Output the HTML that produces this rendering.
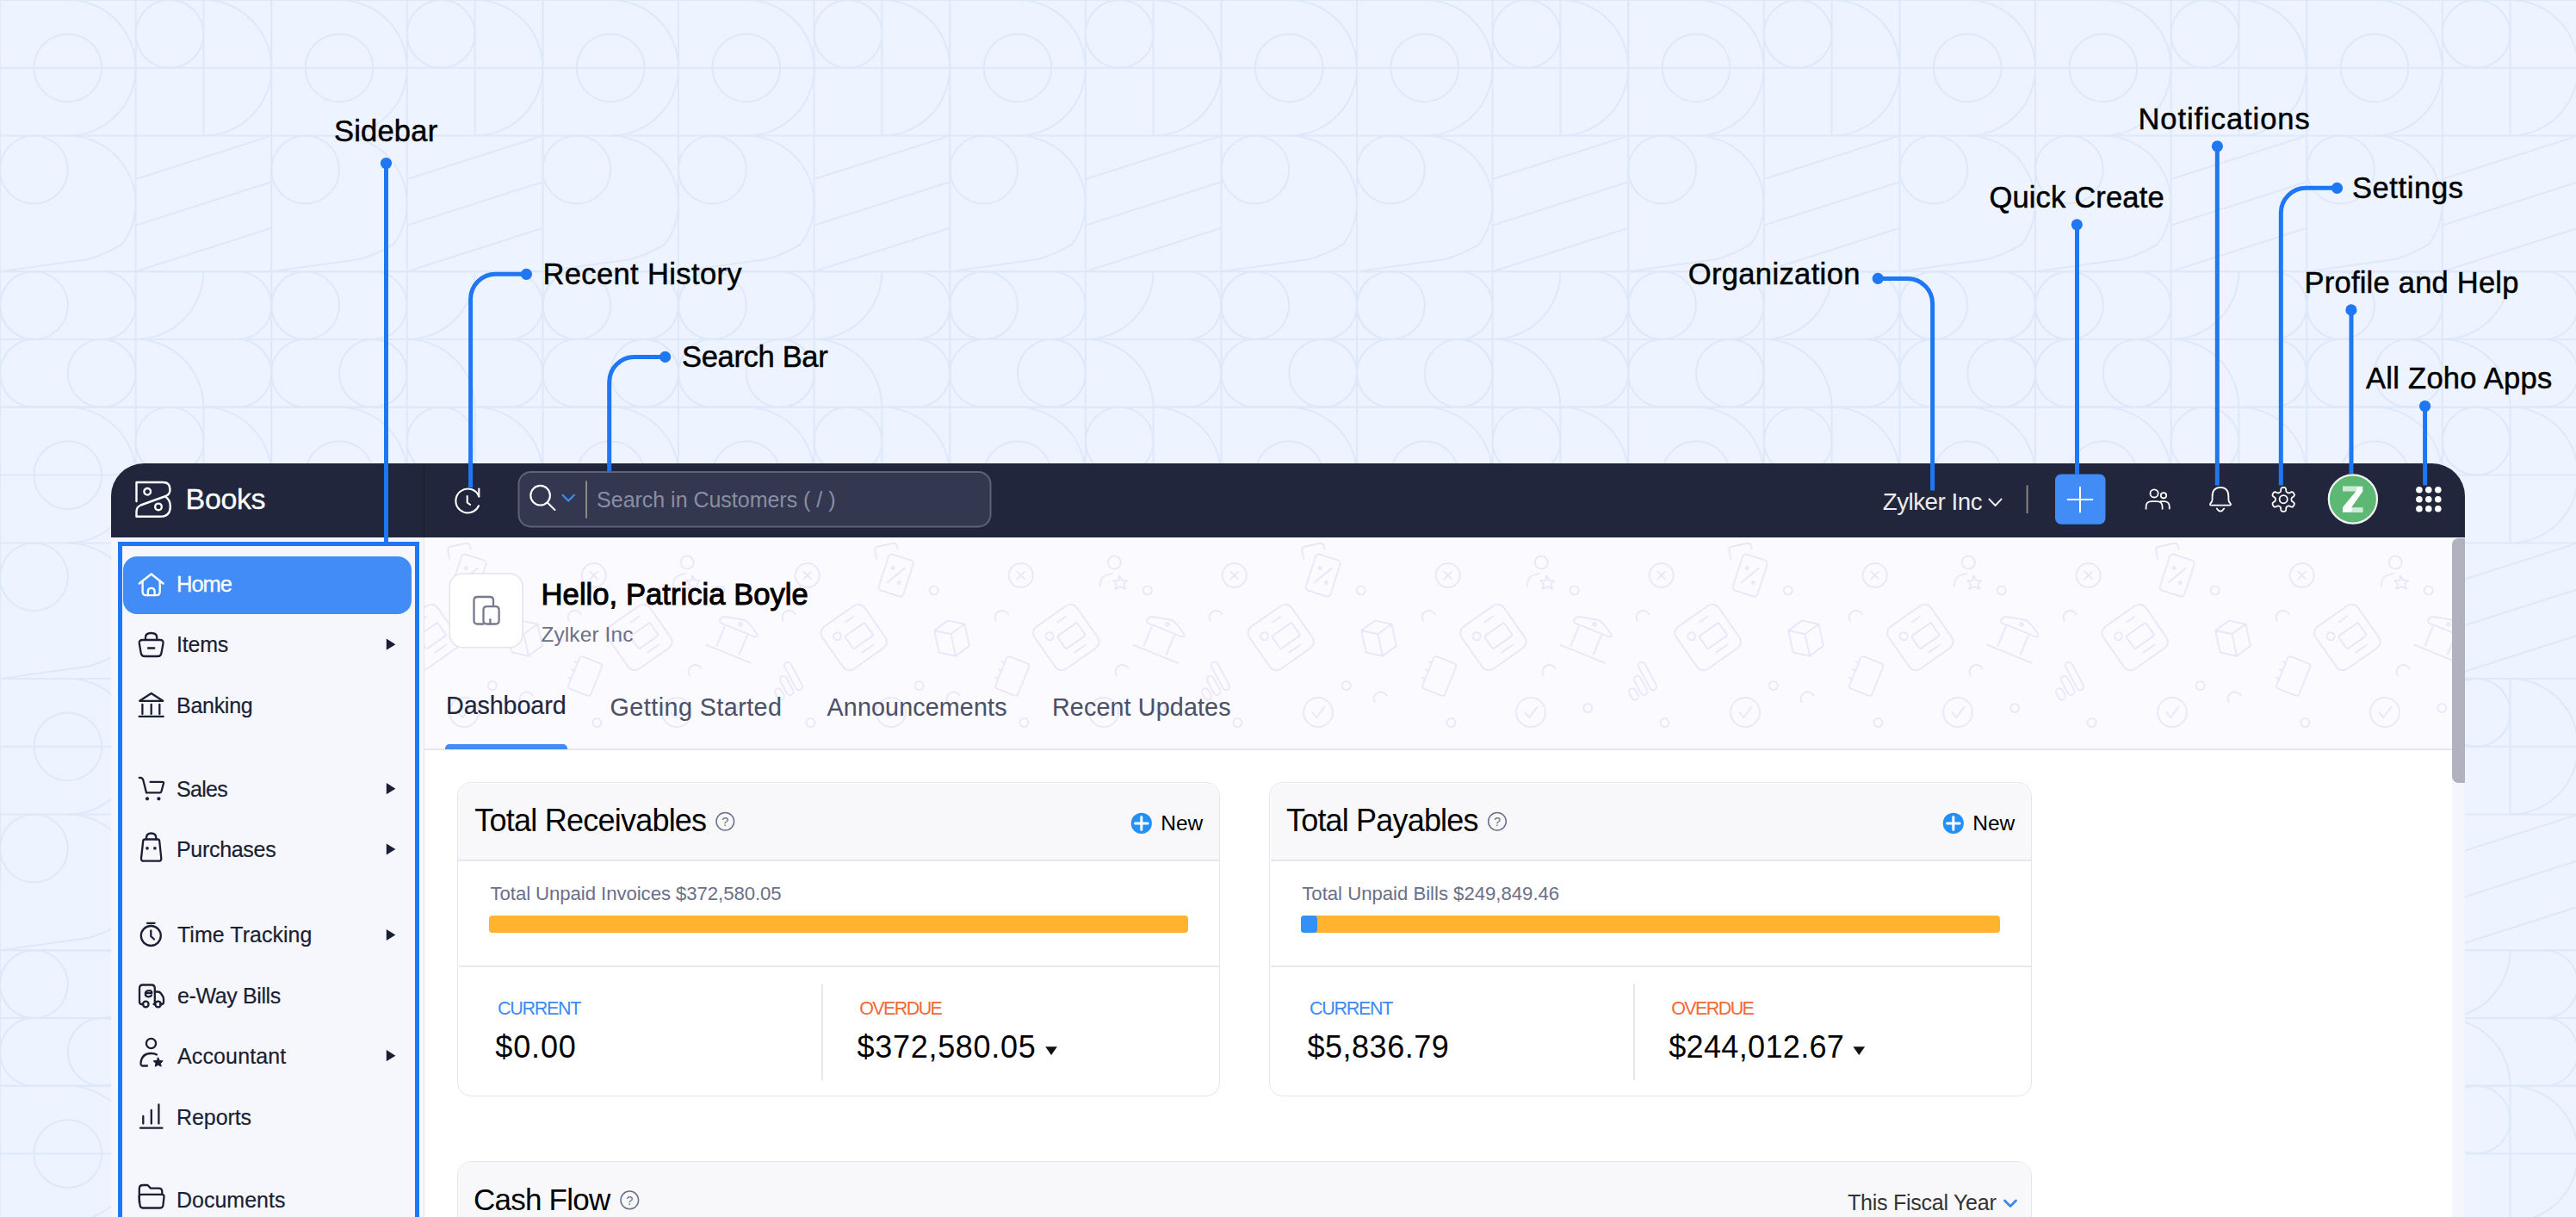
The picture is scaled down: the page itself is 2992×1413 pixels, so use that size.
<!DOCTYPE html>
<html><head><meta charset="utf-8"><title>Zoho Books UI</title>
<style>
*{margin:0;padding:0;box-sizing:border-box}
html,body{width:2992px;height:1413px;overflow:hidden}
body{position:relative;background:#edf4ff;font-family:"Liberation Sans",sans-serif;color:#111}
.t{position:absolute;white-space:nowrap;line-height:1;font-family:"Liberation Sans",sans-serif}
.abs{position:absolute}
svg{position:absolute;overflow:visible}
</style></head>
<body>
<svg class="abs" style="left:0;top:0" width="2992" height="1413" viewBox="0 0 2992 1413"><defs><clipPath id="bgclip"><rect x="630.40" y="-5" width="157.60" height="798.00"/></clipPath><pattern id="bgp" x="0" y="0" width="788.00" height="788.00" patternUnits="userSpaceOnUse"><g fill="none" stroke="#dee8f9" stroke-width="2"><path d="M0.00,0.00 V315.20 M157.60,0.00 V315.20 M236.40,0.00 V157.60 M315.20,0.00 V315.20"/><path d="M0.00,0.00 H315.20 M0.00,78.80 H315.20 M0.00,157.60 H315.20 M0.00,315.20 H315.20"/><path d="M78.80,0.00 A78.8,78.8 0 0 1 78.80,157.60"/><circle cx="78.80" cy="78.80" r="39.4"/><circle cx="197.00" cy="39.40" r="39.4"/><path d="M236.40,0.00 A78.8,78.8 0 0 1 236.40,157.60"/><circle cx="39.40" cy="197.00" r="39.4"/><path d="M78.80,157.60 A78.8,78.8 0 0 1 141.84,283.68 Q122.14,295.50 102.44,301.02 L0.00,315.20"/><path d="M157.60,208.03 L315.20,157.60 M157.60,261.62 L315.20,211.18 M157.60,315.20 L315.20,264.77"/><path d="M315.20,0.00 V315.20 M472.80,0.00 V315.20 M551.60,0.00 V157.60 M630.40,0.00 V315.20"/><path d="M315.20,0.00 H630.40 M315.20,78.80 H630.40 M315.20,157.60 H630.40 M315.20,315.20 H630.40"/><path d="M394.00,0.00 A78.8,78.8 0 0 1 394.00,157.60"/><circle cx="394.00" cy="78.80" r="39.4"/><circle cx="512.20" cy="39.40" r="39.4"/><path d="M551.60,0.00 A78.8,78.8 0 0 1 551.60,157.60"/><circle cx="354.60" cy="197.00" r="39.4"/><path d="M394.00,157.60 A78.8,78.8 0 0 1 457.04,283.68 Q437.34,295.50 417.64,301.02 L315.20,315.20"/><path d="M472.80,208.03 L630.40,157.60 M472.80,261.62 L630.40,211.18 M472.80,315.20 L630.40,264.77"/><g clip-path="url(#bgclip)"><path d="M630.40,0.00 V315.20 M788.00,0.00 V315.20 M866.80,0.00 V157.60 M945.60,0.00 V315.20"/><path d="M630.40,0.00 H945.60 M630.40,78.80 H945.60 M630.40,157.60 H945.60 M630.40,315.20 H945.60"/><path d="M709.20,0.00 A78.8,78.8 0 0 1 709.20,157.60"/><circle cx="709.20" cy="78.80" r="39.4"/><circle cx="827.40" cy="39.40" r="39.4"/><path d="M866.80,0.00 A78.8,78.8 0 0 1 866.80,157.60"/><circle cx="669.80" cy="197.00" r="39.4"/><path d="M709.20,157.60 A78.8,78.8 0 0 1 772.24,283.68 Q752.54,295.50 732.84,301.02 L630.40,315.20"/><path d="M788.00,208.03 L945.60,157.60 M788.00,261.62 L945.60,211.18 M788.00,315.20 L945.60,264.77"/></g><path d="M0.00,315.20 V472.80 M157.60,315.20 V472.80 M315.20,315.20 V472.80"/><path d="M0.00,315.20 H315.20 M0.00,394.00 H315.20 M0.00,472.80 H315.20"/><path d="M39.40,315.20 H118.20 A39.4,39.4 0 0 1 118.20,394.00 H39.40 A39.4,39.4 0 0 1 39.40,315.20 Z"/><circle cx="39.40" cy="354.60" r="39.4"/><path d="M236.40,315.20 H275.80 A39.4,39.4 0 0 1 275.80,394.00 H236.40"/><path d="M39.40,394.00 H118.20 A39.4,39.4 0 0 1 118.20,472.80 H39.40 A39.4,39.4 0 0 1 39.40,394.00 Z"/><circle cx="118.20" cy="433.40" r="39.4"/><path d="M236.40,394.00 H275.80 A39.4,39.4 0 0 1 275.80,472.80 H236.40"/><path d="M157.60,394.00 A78.8,78.8 0 0 0 236.40,315.20"/><path d="M157.60,394.00 A78.8,78.8 0 0 1 236.40,472.80"/><path d="M315.20,315.20 V472.80 M472.80,315.20 V472.80 M630.40,315.20 V472.80"/><path d="M315.20,315.20 H630.40 M315.20,394.00 H630.40 M315.20,472.80 H630.40"/><path d="M354.60,315.20 H433.40 A39.4,39.4 0 0 1 433.40,394.00 H354.60 A39.4,39.4 0 0 1 354.60,315.20 Z"/><circle cx="354.60" cy="354.60" r="39.4"/><path d="M551.60,315.20 H591.00 A39.4,39.4 0 0 1 591.00,394.00 H551.60"/><path d="M354.60,394.00 H433.40 A39.4,39.4 0 0 1 433.40,472.80 H354.60 A39.4,39.4 0 0 1 354.60,394.00 Z"/><circle cx="433.40" cy="433.40" r="39.4"/><path d="M551.60,394.00 H591.00 A39.4,39.4 0 0 1 591.00,472.80 H551.60"/><path d="M472.80,394.00 A78.8,78.8 0 0 0 551.60,315.20"/><path d="M472.80,394.00 A78.8,78.8 0 0 1 551.60,472.80"/><g clip-path="url(#bgclip)"><path d="M630.40,315.20 V472.80 M788.00,315.20 V472.80 M945.60,315.20 V472.80"/><path d="M630.40,315.20 H945.60 M630.40,394.00 H945.60 M630.40,472.80 H945.60"/><path d="M669.80,315.20 H748.60 A39.4,39.4 0 0 1 748.60,394.00 H669.80 A39.4,39.4 0 0 1 669.80,315.20 Z"/><circle cx="669.80" cy="354.60" r="39.4"/><path d="M866.80,315.20 H906.20 A39.4,39.4 0 0 1 906.20,394.00 H866.80"/><path d="M669.80,394.00 H748.60 A39.4,39.4 0 0 1 748.60,472.80 H669.80 A39.4,39.4 0 0 1 669.80,394.00 Z"/><circle cx="748.60" cy="433.40" r="39.4"/><path d="M866.80,394.00 H906.20 A39.4,39.4 0 0 1 906.20,472.80 H866.80"/><path d="M788.00,394.00 A78.8,78.8 0 0 0 866.80,315.20"/><path d="M788.00,394.00 A78.8,78.8 0 0 1 866.80,472.80"/></g><path d="M0.00,472.80 V788.00 M157.60,472.80 V788.00 M236.40,472.80 V630.40 M315.20,472.80 V788.00"/><path d="M0.00,472.80 H315.20 M0.00,551.60 H315.20 M0.00,630.40 H315.20 M0.00,788.00 H315.20"/><path d="M78.80,472.80 A78.8,78.8 0 0 1 78.80,630.40"/><circle cx="78.80" cy="551.60" r="39.4"/><circle cx="197.00" cy="512.20" r="39.4"/><path d="M236.40,472.80 A78.8,78.8 0 0 1 236.40,630.40"/><circle cx="39.40" cy="669.80" r="39.4"/><path d="M78.80,630.40 A78.8,78.8 0 0 1 141.84,756.48 Q122.14,768.30 102.44,773.82 L0.00,788.00"/><path d="M157.60,680.83 L315.20,630.40 M157.60,734.42 L315.20,683.98 M157.60,788.00 L315.20,737.57"/><path d="M315.20,472.80 V788.00 M472.80,472.80 V788.00 M551.60,472.80 V630.40 M630.40,472.80 V788.00"/><path d="M315.20,472.80 H630.40 M315.20,551.60 H630.40 M315.20,630.40 H630.40 M315.20,788.00 H630.40"/><path d="M394.00,472.80 A78.8,78.8 0 0 1 394.00,630.40"/><circle cx="394.00" cy="551.60" r="39.4"/><circle cx="512.20" cy="512.20" r="39.4"/><path d="M551.60,472.80 A78.8,78.8 0 0 1 551.60,630.40"/><circle cx="354.60" cy="669.80" r="39.4"/><path d="M394.00,630.40 A78.8,78.8 0 0 1 457.04,756.48 Q437.34,768.30 417.64,773.82 L315.20,788.00"/><path d="M472.80,680.83 L630.40,630.40 M472.80,734.42 L630.40,683.98 M472.80,788.00 L630.40,737.57"/><g clip-path="url(#bgclip)"><path d="M630.40,472.80 V788.00 M788.00,472.80 V788.00 M866.80,472.80 V630.40 M945.60,472.80 V788.00"/><path d="M630.40,472.80 H945.60 M630.40,551.60 H945.60 M630.40,630.40 H945.60 M630.40,788.00 H945.60"/><path d="M709.20,472.80 A78.8,78.8 0 0 1 709.20,630.40"/><circle cx="709.20" cy="551.60" r="39.4"/><circle cx="827.40" cy="512.20" r="39.4"/><path d="M866.80,472.80 A78.8,78.8 0 0 1 866.80,630.40"/><circle cx="669.80" cy="669.80" r="39.4"/><path d="M709.20,630.40 A78.8,78.8 0 0 1 772.24,756.48 Q752.54,768.30 732.84,773.82 L630.40,788.00"/><path d="M788.00,680.83 L945.60,630.40 M788.00,734.42 L945.60,683.98 M788.00,788.00 L945.60,737.57"/></g><path d="M788.00,0 V788.00 M0,788.00 H788.00"/></g></pattern></defs><rect x="0" y="0" width="2992" height="1413" fill="url(#bgp)"/></svg>
<div class="abs" style="left:129px;top:537.5px;width:2734px;height:86px;background:#21263c;border-radius:38px 38px 0 0"></div>
<div class="abs" style="left:491.5px;top:537.5px;width:1.5px;height:86px;background:#1a1e31"></div>
<div class="abs" style="left:129px;top:623.5px;width:362.5px;height:800px;background:#f6f7fd"></div>
<div class="abs" style="left:491.5px;top:623.5px;width:1.5px;height:800px;background:#e4e4ed"></div>
<div class="abs" style="left:493px;top:623.5px;width:2355px;height:246px;background:#fbfbff"></div>
<svg style="left:493px;top:623.5px" width="2355" height="246" viewBox="0 0 2355 246"><defs><pattern id="ctp" x="-51.3" y="0" width="496" height="248" patternUnits="userSpaceOnUse"><g fill="none" stroke="#e6e4f9" stroke-width="1.7" stroke-linecap="round" stroke-linejoin="round"><circle cx="0" cy="44" r="14"/><path d="M-4.5,39.5 L4.5,48.5 M4.5,39.5 L-4.5,48.5"/><circle cx="248" cy="44" r="14"/><path d="M243.5,39.5 L252.5,48.5 M252.5,39.5 L243.5,48.5"/><circle cx="496" cy="44" r="14"/><path d="M491.5,39.5 L500.5,48.5 M500.5,39.5 L491.5,48.5"/><circle cx="356.5" cy="29" r="7.5"/><path d="M340.5,57 Q338.5,44 354.5,42"/><path d="M362.5,44 L365.5,50 L371.5,50 L367.5,54 L369.5,60 L363.5,57 L357.5,60 L359.5,54 L355.5,50 L361.5,50 Z"/><g transform="rotate(18 102.8 44)"><rect x="88" y="22" width="30" height="44" rx="4"/><path d="M96,55 L110,33"/><circle cx="97" cy="37" r="1.5"/><circle cx="109" cy="51" r="1.5"/></g><g transform="rotate(-12 96 30)"><path d="M82,22 V12 Q82,8 86,8 H104 Q108,8 108,12 V16"/></g><circle cx="395" cy="61.5" r="5"/><circle cx="147" cy="61.5" r="5"/><circle cx="130" cy="172" r="5"/><circle cx="251.7" cy="215" r="5"/><circle cx="3.7" cy="215" r="5"/><circle cx="499.7" cy="215" r="5"/><circle cx="410.5" cy="198" r="5"/><g transform="rotate(-35 300.6 116)"><rect x="270.6" y="86" width="60" height="60" rx="9"/><circle cx="285.6" cy="104" r="4.5"/><rect x="292.6" y="109" width="28" height="18" rx="2"/><path d="M302.6,96 H314.6 M298.6,136 H314.6"/></g><g transform="rotate(-35 54 116)"><rect x="24" y="86" width="60" height="60" rx="9"/><circle cx="39" cy="104" r="4.5"/><rect x="46" y="109" width="28" height="18" rx="2"/><path d="M56,96 H68 M52,136 H68"/></g><g transform="rotate(22 410 116)"><path d="M388,104 Q388,98 394,97 L412,93 Q418,92 424,96 L434,102 Q437,106 432,106 H390 Z"/><path d="M396,108 V132 M424,108 V132"/><path d="M384,136 H440"/><circle cx="412" cy="99" r="1.8"/></g><g transform="rotate(-12 168 118)"><path d="M150,104 L168,96 L186,104 V130 L168,138 L150,130 Z"/><path d="M150,104 L168,112 L186,104 M168,112 V138"/></g><path d="M233,89 A8,8 0 0 0 219,97"/><path d="M482,89 A8,8 0 0 0 468,97"/><path d="M373,152 A8,8 0 0 0 359,160"/><path d="M177,183.5 A8,8 0 0 0 163,191.5"/><g transform="rotate(22 238 161)"><rect x="224" y="141" width="28" height="40" rx="3"/><path d="M224,150 H220 M224,160 H220 M224,170 H220"/></g><g transform="rotate(-28 470.7 168)"><rect x="454" y="170" width="8" height="14" rx="4"/><rect x="466" y="160" width="8" height="24" rx="4"/><rect x="478" y="148" width="8" height="36" rx="4"/></g><circle cx="97.3" cy="203" r="17"/><path d="M90.5,203 L95.5,209 L104.5,197"/><circle cx="344.3" cy="203" r="17"/><path d="M337.5,203 L342.5,209 L351.5,197"/></g></pattern></defs><rect width="2355" height="246" fill="url(#ctp)"/></svg>
<div class="abs" style="left:493px;top:869px;width:2355px;height:1.5px;background:#e6e6f0"></div>
<div class="abs" style="left:493px;top:870.5px;width:2355px;height:600px;background:#fff"></div>
<div class="abs" style="left:2848px;top:623.5px;width:15px;height:800px;background:#f5f5fc"></div>
<div class="abs" style="left:2848.2px;top:624.5px;width:14.8px;height:284px;background:#b1b1bf;border-radius:7.5px 0 0 7.5px"></div>
<div class="abs" style="left:137.2px;top:629.2px;width:349.6px;height:820px;border:5px solid #1f77f4;border-bottom:none"></div>
<div class="abs" style="left:142.7px;top:645.9px;width:335.3px;height:67.4px;background:#418cf7;border-radius:16px"></div>
<svg style="left:0;top:0" width="2992" height="1413">
<g fill="none" stroke="#fff" stroke-width="2.4" stroke-linejoin="round" stroke-linecap="round">
<path d="M158.5,582 V560 H189.5 Q197.5,560 197.5,568.5 Q197.5,574 192.5,576 L163.5,586.5 Q158.5,588.5 158.5,594 V599.8 H186 Q197.8,599.8 197.8,588 Q197.8,580.5 192.5,577"/>
<circle cx="171.2" cy="570.8" r="3.8"/>
<circle cx="184" cy="588.4" r="3.8"/>
</g>
<g fill="none" stroke="#fff" stroke-width="2.1" stroke-linecap="round" stroke-linejoin="round">
<path d="M556.3,576.4 A13.95,13.95 0 1 0 556,587.3"/>
<path d="M556.3,567.6 V576.4"/>
<path d="M542.7,576 V583.5 L546,585.8"/>
</g>
<rect x="602.5" y="548" width="548" height="63.5" rx="14" fill="#333750" stroke="#5e6277" stroke-width="2"/>
<g fill="none" stroke="#fff" stroke-width="2.1" stroke-linecap="round">
<circle cx="627.6" cy="575.2" r="11.3"/>
<path d="M635.8,583.6 L644.4,592"/>
</g>
<path d="M653.5,574.8 L660.2,581.5 L666.9,574.8" fill="none" stroke="#3b8ff7" stroke-width="2.2" stroke-linecap="round" stroke-linejoin="round"/>
<rect x="680" y="558.4" width="2" height="43.3" fill="#8c8a79"/>
<path d="M2310.5,579.6 L2317.5,587 L2324.5,579.6" fill="none" stroke="#eee" stroke-width="2" stroke-linecap="round" stroke-linejoin="round"/>
<rect x="2353.6" y="563.4" width="2" height="32.7" fill="#8a877c"/>
<rect x="2387" y="550.4" width="58.5" height="58.4" rx="7" fill="#418cf7"/>
<path d="M2401.7,580 H2430.3 M2416,565.7 V594.4" stroke="#fff" stroke-width="2" stroke-linecap="round"/>
<g fill="none" stroke="#fff" stroke-width="1.8" stroke-linecap="round" stroke-linejoin="round">
<circle cx="2502.1" cy="572.9" r="4.6"/>
<path d="M2492.6,590.8 V588.5 Q2492.6,582.2 2499.2,582.2 H2505 Q2511.6,582.2 2511.6,588.5 V590.8"/>
<circle cx="2513" cy="575.3" r="3.2"/>
<path d="M2509.5,582.2 H2513.2 Q2519.8,582.2 2519.8,588.5 V590.5"/>
</g>
<g fill="none" stroke="#fff" stroke-width="1.8" stroke-linecap="round" stroke-linejoin="round">
<path d="M2579,565.9 Q2569.6,566 2569.6,576.5 V580 Q2569.6,582.3 2567.8,584 Q2565.6,586.6 2568.8,586.6 H2589.2 Q2592.4,586.6 2590.2,584 Q2588.4,582.3 2588.4,580 V576.5 Q2588.4,566 2579,565.9 Z"/>
<path d="M2574.8,590.4 Q2579,596.8 2583.2,590.4"/>
</g>
<g fill="none" stroke="#fff" stroke-width="1.8" stroke-linejoin="round">
<path d="M2661.50,579.90 L2661.50,580.22 L2661.50,580.55 L2661.52,580.88 L2661.59,581.22 L2661.77,581.59 L2662.18,582.02 L2662.94,582.58 L2663.86,583.24 L2664.56,583.92 L2664.87,584.51 L2664.92,585.04 L2664.83,585.52 L2664.67,585.98 L2664.47,586.42 L2664.24,586.85 L2663.98,587.26 L2663.70,587.66 L2663.39,588.03 L2663.01,588.35 L2662.53,588.57 L2661.86,588.59 L2660.93,588.33 L2659.89,587.86 L2659.03,587.48 L2658.44,587.34 L2658.04,587.37 L2657.71,587.48 L2657.42,587.63 L2657.13,587.79 L2656.85,587.95 L2656.57,588.12 L2656.29,588.28 L2656.01,588.46 L2655.75,588.69 L2655.52,589.03 L2655.35,589.61 L2655.25,590.54 L2655.14,591.67 L2654.90,592.61 L2654.54,593.18 L2654.11,593.49 L2653.65,593.65 L2653.17,593.74 L2652.68,593.79 L2652.20,593.80 L2651.72,593.79 L2651.23,593.74 L2650.75,593.65 L2650.29,593.49 L2649.86,593.18 L2649.50,592.61 L2649.26,591.67 L2649.15,590.54 L2649.05,589.61 L2648.88,589.03 L2648.65,588.69 L2648.39,588.46 L2648.11,588.28 L2647.83,588.12 L2647.55,587.95 L2647.27,587.79 L2646.98,587.63 L2646.69,587.48 L2646.36,587.37 L2645.96,587.34 L2645.37,587.48 L2644.51,587.86 L2643.47,588.33 L2642.54,588.59 L2641.87,588.57 L2641.39,588.35 L2641.01,588.03 L2640.70,587.66 L2640.42,587.26 L2640.16,586.85 L2639.93,586.42 L2639.73,585.98 L2639.57,585.52 L2639.48,585.04 L2639.53,584.51 L2639.84,583.92 L2640.54,583.24 L2641.46,582.58 L2642.22,582.02 L2642.63,581.59 L2642.81,581.22 L2642.88,580.88 L2642.90,580.55 L2642.90,580.22 L2642.90,579.90 L2642.90,579.58 L2642.90,579.25 L2642.88,578.92 L2642.81,578.58 L2642.63,578.21 L2642.22,577.78 L2641.46,577.22 L2640.54,576.56 L2639.84,575.88 L2639.53,575.29 L2639.48,574.76 L2639.57,574.28 L2639.73,573.82 L2639.93,573.38 L2640.16,572.95 L2640.42,572.54 L2640.70,572.14 L2641.01,571.77 L2641.39,571.45 L2641.87,571.23 L2642.54,571.21 L2643.47,571.47 L2644.51,571.94 L2645.37,572.32 L2645.96,572.46 L2646.36,572.43 L2646.69,572.32 L2646.98,572.17 L2647.27,572.01 L2647.55,571.85 L2647.83,571.68 L2648.11,571.52 L2648.39,571.34 L2648.65,571.11 L2648.88,570.77 L2649.05,570.19 L2649.15,569.26 L2649.26,568.13 L2649.50,567.19 L2649.86,566.62 L2650.29,566.31 L2650.75,566.15 L2651.23,566.06 L2651.72,566.01 L2652.20,566.00 L2652.68,566.01 L2653.17,566.06 L2653.65,566.15 L2654.11,566.31 L2654.54,566.62 L2654.90,567.19 L2655.14,568.13 L2655.25,569.26 L2655.35,570.19 L2655.52,570.77 L2655.75,571.11 L2656.01,571.34 L2656.29,571.52 L2656.57,571.68 L2656.85,571.85 L2657.13,572.01 L2657.42,572.17 L2657.71,572.32 L2658.04,572.43 L2658.44,572.46 L2659.03,572.32 L2659.89,571.94 L2660.93,571.47 L2661.86,571.21 L2662.53,571.23 L2663.01,571.45 L2663.39,571.77 L2663.70,572.14 L2663.98,572.54 L2664.24,572.95 L2664.47,573.38 L2664.67,573.82 L2664.83,574.28 L2664.92,574.76 L2664.87,575.29 L2664.56,575.88 L2663.86,576.56 L2662.94,577.22 L2662.18,577.78 L2661.77,578.21 L2661.59,578.58 L2661.52,578.92 L2661.50,579.25 L2661.50,579.58 Z"/>
<circle cx="2652.2" cy="579.7" r="4.6"/>
</g>
<circle cx="2732.9" cy="579.5" r="28.1" fill="#5db874" stroke="#f4f4f4" stroke-width="2.2"/>
<path d="M2721,564.8 H2744.3 V570.6 L2731,589.4 H2744.3 V594.7 H2721 V589 L2736.5,570.2 H2721 Z" fill="#fff"/>
<path d="M2721,564.8 H2738.5 L2736.5,570.2 H2721 Z" fill="#cfe9d4"/>
<path d="M2733.5,589.4 H2744.3 V594.7 H2729.8 Z" fill="#cfe9d4"/>
<circle cx="2809.9" cy="568.7" r="3.8" fill="#fff"/><circle cx="2809.9" cy="579.8" r="3.8" fill="#fff"/><circle cx="2809.9" cy="590.8" r="3.8" fill="#fff"/><circle cx="2820.8" cy="568.7" r="3.8" fill="#fff"/><circle cx="2820.8" cy="579.8" r="3.8" fill="#fff"/><circle cx="2820.8" cy="590.8" r="3.8" fill="#fff"/><circle cx="2831.8" cy="568.7" r="3.8" fill="#fff"/><circle cx="2831.8" cy="579.8" r="3.8" fill="#fff"/><circle cx="2831.8" cy="590.8" r="3.8" fill="#fff"/>
<g fill="none" stroke="#fff" stroke-width="2.3" stroke-linecap="round" stroke-linejoin="round">
<path d="M161.8,677.5 L175.7,666.5 L189.6,677.5"/>
<path d="M165.6,674.5 V687 Q165.6,691.2 169.8,691.2 H181.5 Q185.7,691.2 185.7,687 V674.5"/>
<path d="M171.8,691.2 V686.5 Q171.8,682.8 175.7,682.8 Q179.6,682.8 179.6,686.5 V691.2"/>
</g>
<g fill="none" stroke="#1b1f33" stroke-width="2.3" stroke-linecap="round" stroke-linejoin="round">
<!-- items basket -->
<path d="M169,742.5 V740 Q169,735 175.6,735 Q182.2,735 182.2,740 V742.5"/>
<path d="M165.5,743 H186 Q190,743 189.5,747 L187.5,758 Q187,762 183,762 H168.2 Q164.2,762 163.7,758 L161.8,747 Q161.3,743 165.5,743 Z"/>
<path d="M172,752.5 H179.3"/>
<!-- banking -->
<path d="M162.2,813.8 L175.7,805 L189.2,813.8 Z"/>
<path d="M165.4,818 V829 M175.7,818 V829 M185.3,818 V829"/>
<path d="M161.6,831.8 H189.8"/>
<!-- sales cart -->
<path d="M161.8,903 Q165.5,902.6 166.4,906 L170,920.4 H185.6 Q187,920.4 187.4,919 L190,909.5 Q190.4,907.8 188.6,907.8 H174.5"/>
<circle cx="171" cy="927.3" r="1" fill="#1b1f33"/>
<circle cx="184.4" cy="927.3" r="1" fill="#1b1f33"/>
<!-- purchases bag -->
<path d="M170,974.5 V973 Q170,967.5 175.6,967.5 Q181.3,967.5 181.3,973 V974.5"/>
<path d="M168.5,974.5 H183 Q185,974.5 185.2,976.5 L187.3,996.5 Q187.5,999.7 184.5,999.7 H166.8 Q163.8,999.7 164,996.5 L166.2,976.5 Q166.4,974.5 168.5,974.5 Z"/>
<circle cx="171" cy="984.8" r="0.7" fill="#1b1f33"/>
<circle cx="179.9" cy="984.8" r="0.7" fill="#1b1f33"/>
<!-- time tracking -->
<circle cx="175.3" cy="1086.5" r="11.5"/>
<path d="M171,1071.8 H179.6"/>
<path d="M175.3,1080.5 V1087 L179,1090.5"/>
<!-- e-way bills -->
<path d="M166.2,1166 H164.8 Q162,1166 162,1163 V1147.5 Q162,1143.5 166,1143.5 H176 Q179.8,1143.5 179.8,1147.5 V1166 H178.5"/>
<path d="M179.8,1151.5 H183.5 Q185.5,1151.5 187,1153.5 L189.3,1157 Q190,1158.3 190,1160 V1163.5 Q190,1166 187.5,1166 H186"/>
<circle cx="169.3" cy="1166" r="3.3"/>
<circle cx="183.6" cy="1166" r="3.3"/>
<path d="M173.8,1150.2 Q168.8,1150.2 168.8,1153.8 Q168.8,1157.3 172.7,1157.3 Q175.2,1157.3 176,1155.6 M169,1153.2 H176.3 Q176.5,1150.2 173.8,1150.2"/>
<!-- accountant -->
<circle cx="175.5" cy="1211.5" r="5.6"/>
<path d="M171,1237.5 H165.8 Q163,1237.5 163.6,1233.5 Q165,1223 175.5,1223 Q179.5,1223 182,1224.5"/>
<path d="M183.7,1228 L185.4,1231.4 L189.2,1231.9 L186.4,1234.5 L187.2,1238.2 L183.7,1236.4 L180.2,1238.2 L181,1234.5 L178.2,1231.9 L182,1231.4 Z" fill="#1b1f33" stroke-width="1"/>
<!-- reports -->
<path d="M166.3,1296 V1304.5 M175.8,1289 V1304.5 M184.4,1282.5 V1304.5"/>
<path d="M163,1309.7 H188.5"/>
<!-- documents -->
<path d="M161.8,1396 V1380 Q161.8,1376 166,1376 H171.5 L175,1379.6 H184.2 Q188.3,1379.6 188.3,1383.6 V1386.8"/>
<path d="M164.5,1386.8 H188 Q190.8,1386.8 190.5,1389.6 L189.5,1398.8 Q189.2,1402.5 185.5,1402.5 H166.5 Q162.8,1402.5 162.5,1398.8 L161.6,1389.6 Q161.4,1386.8 164.5,1386.8 Z"/>
</g>
<path d="M448.8,741.6 L459.4,748.2 L448.8,754.8 Z" fill="#1b1f33"/><path d="M448.8,909.1 L459.4,915.7 L448.8,922.3 Z" fill="#1b1f33"/><path d="M448.8,979.4 L459.4,986.0 L448.8,992.6 Z" fill="#1b1f33"/><path d="M448.8,1078.9 L459.4,1085.5 L448.8,1092.1 Z" fill="#1b1f33"/><path d="M448.8,1219.1 L459.4,1225.7 L448.8,1232.3 Z" fill="#1b1f33"/>
<rect x="522.3" y="665.9" width="84.7" height="85.8" rx="15" fill="#fff" stroke="#e3e3eb" stroke-width="1.5"/>
<g fill="none" stroke="#767a8d" stroke-width="2.3" stroke-linejoin="round" stroke-linecap="round">
<path d="M561.5,724.5 H554.5 Q550.5,724.5 550.5,720.5 V697 Q550.5,693 554.5,693 H569 Q573,693 573,697 V704.2"/>
<path d="M565.5,724.5 Q561.5,724.5 561.5,720.5 V708.5 Q561.5,704.2 565.5,704.2 H575.5 Q579.6,704.2 579.6,708.5 V720.5 Q579.6,724.5 575.5,724.5 Z"/>
<path d="M569.4,724.5 V719.2"/>
</g>
</svg>
<div class="abs" style="left:517.2px;top:863.5px;width:141.5px;height:6px;background:#418cf7;border-radius:5px 5px 0 0"></div>
<div class="abs" style="left:530.5px;top:908.2px;width:886.5px;height:364.79999999999995px;background:#fff;border:1.5px solid #e4e5ee;border-radius:16px;overflow:hidden"></div>
<div class="abs" style="left:532.0px;top:909.7px;width:883.5px;height:88.6px;background:#f8f8fb;border-radius:14.5px 14.5px 0 0"></div>
<div class="abs" style="left:532.0px;top:998.3000000000001px;width:883.5px;height:1.5px;background:#e7e7f0"></div>
<div class="abs" style="left:1474px;top:908.2px;width:886px;height:364.79999999999995px;background:#fff;border:1.5px solid #e4e5ee;border-radius:16px;overflow:hidden"></div>
<div class="abs" style="left:1475.5px;top:909.7px;width:883px;height:88.6px;background:#f8f8fb;border-radius:14.5px 14.5px 0 0"></div>
<div class="abs" style="left:1475.5px;top:998.3000000000001px;width:883px;height:1.5px;background:#e7e7f0"></div>
<div class="abs" style="left:530.5px;top:1347.7px;width:1829.9px;height:252.29999999999995px;background:#fff;border:1.5px solid #e4e5ee;border-radius:16px;overflow:hidden"></div>
<div class="abs" style="left:532.0px;top:1349.2px;width:1826.9px;height:95px;background:#f8f8fb;border-radius:14.5px 14.5px 0 0"></div>
<div class="abs" style="left:532.0px;top:1444.2px;width:1826.9px;height:1.5px;background:#e7e7f0"></div>
<div class="abs" style="left:568.4px;top:1062.8px;width:811.5px;height:20.7px;background:#ffb32e;border-radius:4px"></div>
<div class="abs" style="left:1511.4px;top:1062.8px;width:811.5px;height:20.7px;background:#ffb32e;border-radius:4px"></div>
<div class="abs" style="left:1511.4px;top:1062.8px;width:19.1px;height:20.7px;background:#3390f6;border-radius:4px"></div>
<div class="abs" style="left:532.5px;top:1121.3px;width:883px;height:1.5px;background:#e7e7f0"></div>
<div class="abs" style="left:1475.5px;top:1121.3px;width:883px;height:1.5px;background:#e7e7f0"></div>
<div class="abs" style="left:954px;top:1142.6px;width:1.5px;height:111px;background:#e6e6ee"></div>
<div class="abs" style="left:1897px;top:1142.6px;width:1.5px;height:111px;background:#e6e6ee"></div>
<svg style="left:0;top:0" width="2992" height="1413">
<circle cx="842.3" cy="953.8" r="10.3" fill="none" stroke="#6b7088" stroke-width="1.5"/><text x="842.3" y="959.0" font-family="Liberation Sans" font-size="14.5" fill="#6b7088" text-anchor="middle">?</text><circle cx="1739.0" cy="953.8" r="10.3" fill="none" stroke="#6b7088" stroke-width="1.5"/><text x="1739.0" y="959.0" font-family="Liberation Sans" font-size="14.5" fill="#6b7088" text-anchor="middle">?</text><circle cx="731.3" cy="1393.4" r="10.3" fill="none" stroke="#6b7088" stroke-width="1.5"/><text x="731.3" y="1398.6000000000001" font-family="Liberation Sans" font-size="14.5" fill="#6b7088" text-anchor="middle">?</text><circle cx="1325.8" cy="955.9" r="12.1" fill="#2290f8"/><path d="M1318.5,955.9 H1333.1 M1325.8,948.6 V963.2" stroke="#fff" stroke-width="3" stroke-linecap="round"/><circle cx="2268.8" cy="955.9" r="12.1" fill="#2290f8"/><path d="M2261.5,955.9 H2276.1000000000004 M2268.8,948.6 V963.2" stroke="#fff" stroke-width="3" stroke-linecap="round"/><path d="M1214.2,1215.2 H1227.9 L1221.05,1225 Z" fill="#111"/><path d="M2152.4,1215.2 H2166.1 L2159.25,1225 Z" fill="#111"/><path d="M2328.5,1394 L2335,1400.5 L2341.5,1394" fill="none" stroke="#3b86f5" stroke-width="2.8" stroke-linecap="round" stroke-linejoin="round"/></svg>
<div class="t" style="left:387.9px;top:135.3px;font-size:34.5px;font-weight:400;color:#000;letter-spacing:0.23px;-webkit-text-stroke:0.5px #000;">Sidebar</div>
<div class="t" style="left:630.5px;top:300.6px;font-size:34.5px;font-weight:400;color:#000;letter-spacing:0.37px;-webkit-text-stroke:0.5px #000;">Recent History</div>
<div class="t" style="left:792.0px;top:396.5px;font-size:34.5px;font-weight:400;color:#000;letter-spacing:-0.32px;-webkit-text-stroke:0.5px #000;">Search Bar</div>
<div class="t" style="left:1960.7px;top:301.4px;font-size:34.5px;font-weight:400;color:#000;letter-spacing:0.37px;-webkit-text-stroke:0.5px #000;">Organization</div>
<div class="t" style="left:2310.4px;top:211.8px;font-size:34.5px;font-weight:400;color:#000;letter-spacing:0.17px;-webkit-text-stroke:0.5px #000;">Quick Create</div>
<div class="t" style="left:2483.4px;top:120.8px;font-size:34.5px;font-weight:400;color:#000;letter-spacing:0.95px;-webkit-text-stroke:0.5px #000;">Notifications</div>
<div class="t" style="left:2731.9px;top:201.2px;font-size:34.5px;font-weight:400;color:#000;letter-spacing:0.64px;-webkit-text-stroke:0.5px #000;">Settings</div>
<div class="t" style="left:2676.5px;top:310.7px;font-size:34.5px;font-weight:400;color:#000;letter-spacing:0.23px;-webkit-text-stroke:0.5px #000;">Profile and Help</div>
<div class="t" style="left:2748.0px;top:422.4px;font-size:34.5px;font-weight:400;color:#000;letter-spacing:0.28px;-webkit-text-stroke:0.5px #000;">All Zoho Apps</div>
<div class="t" style="left:215.6px;top:562.0px;font-size:34px;font-weight:400;color:#fff;letter-spacing:-0.37px;-webkit-text-stroke:0.3px #fff;">Books</div>
<div class="t" style="left:693.1px;top:567.7px;font-size:25px;font-weight:400;color:#8a8ea3;letter-spacing:-0.02px;">Search in Customers ( / )</div>
<div class="t" style="left:2186.7px;top:569.3px;font-size:27.7px;font-weight:400;color:#ececec;letter-spacing:-0.46px;">Zylker Inc</div>
<div class="t" style="left:205.0px;top:666.2px;font-size:25.5px;font-weight:400;color:#fff;letter-spacing:-1.00px;-webkit-text-stroke:0.3px #fff;">Home</div>
<div class="t" style="left:205.0px;top:736.0px;font-size:25px;font-weight:400;color:#1b1f33;letter-spacing:-0.22px;-webkit-text-stroke:0.2px #1b1f33;">Items</div>
<div class="t" style="left:205.0px;top:806.6px;font-size:25px;font-weight:400;color:#1b1f33;letter-spacing:-0.28px;-webkit-text-stroke:0.2px #1b1f33;">Banking</div>
<div class="t" style="left:205.0px;top:903.5px;font-size:25px;font-weight:400;color:#1b1f33;letter-spacing:-0.67px;-webkit-text-stroke:0.2px #1b1f33;">Sales</div>
<div class="t" style="left:205.0px;top:973.8px;font-size:25px;font-weight:400;color:#1b1f33;letter-spacing:-0.31px;-webkit-text-stroke:0.2px #1b1f33;">Purchases</div>
<div class="t" style="left:206.0px;top:1073.3px;font-size:25px;font-weight:400;color:#1b1f33;letter-spacing:0.03px;-webkit-text-stroke:0.2px #1b1f33;">Time Tracking</div>
<div class="t" style="left:206.0px;top:1144.2px;font-size:25px;font-weight:400;color:#1b1f33;letter-spacing:-0.38px;-webkit-text-stroke:0.2px #1b1f33;">e-Way Bills</div>
<div class="t" style="left:206.0px;top:1213.5px;font-size:25px;font-weight:400;color:#1b1f33;letter-spacing:0.13px;-webkit-text-stroke:0.2px #1b1f33;">Accountant</div>
<div class="t" style="left:205.0px;top:1284.8px;font-size:25px;font-weight:400;color:#1b1f33;letter-spacing:-0.07px;-webkit-text-stroke:0.2px #1b1f33;">Reports</div>
<div class="t" style="left:205.0px;top:1380.8px;font-size:25px;font-weight:400;color:#1b1f33;letter-spacing:0.00px;-webkit-text-stroke:0.2px #1b1f33;">Documents</div>
<div class="t" style="left:628.6px;top:672.7px;font-size:34.6px;font-weight:400;color:#000;letter-spacing:0.04px;-webkit-text-stroke:1.0px #000;">Hello, Patricia Boyle</div>
<div class="t" style="left:628.4px;top:724.9px;font-size:24.3px;font-weight:400;color:#6b7088;letter-spacing:0.19px;">Zylker Inc</div>
<div class="t" style="left:518.0px;top:805.4px;font-size:28.7px;font-weight:400;color:#21263c;letter-spacing:-0.09px;-webkit-text-stroke:0.2px #21263c;">Dashboard</div>
<div class="t" style="left:708.6px;top:807.2px;font-size:28.7px;font-weight:400;color:#4b5168;letter-spacing:0.46px;-webkit-text-stroke:0.1px #4b5168;">Getting Started</div>
<div class="t" style="left:960.6px;top:807.2px;font-size:28.7px;font-weight:400;color:#4b5168;letter-spacing:0.13px;-webkit-text-stroke:0.1px #4b5168;">Announcements</div>
<div class="t" style="left:1222.0px;top:807.2px;font-size:28.7px;font-weight:400;color:#4b5168;letter-spacing:0.14px;-webkit-text-stroke:0.1px #4b5168;">Recent Updates</div>
<div class="t" style="left:551.3px;top:934.5px;font-size:36px;font-weight:400;color:#000;letter-spacing:-0.77px;">Total Receivables</div>
<div class="t" style="left:1348.3px;top:944.2px;font-size:24.5px;font-weight:400;color:#000;letter-spacing:-0.05px;">New</div>
<div class="t" style="left:569.5px;top:1026.9px;font-size:22.2px;font-weight:400;color:#6b7088;letter-spacing:-0.07px;">Total Unpaid Invoices $372,580.05</div>
<div class="t" style="left:578.0px;top:1160.8px;font-size:21.5px;font-weight:400;color:#3d8af5;letter-spacing:-1.27px;">CURRENT</div>
<div class="t" style="left:575.3px;top:1197.9px;font-size:36px;font-weight:400;color:#000;letter-spacing:0.85px;">$0.00</div>
<div class="t" style="left:998.2px;top:1160.8px;font-size:21.5px;font-weight:400;color:#f2683a;letter-spacing:-1.60px;">OVERDUE</div>
<div class="t" style="left:995.6px;top:1197.9px;font-size:36px;font-weight:400;color:#000;letter-spacing:0.69px;">$372,580.05</div>
<div class="t" style="left:1494.0px;top:934.5px;font-size:36px;font-weight:400;color:#000;letter-spacing:-0.82px;">Total Payables</div>
<div class="t" style="left:2291.3px;top:944.2px;font-size:24.5px;font-weight:400;color:#000;letter-spacing:-0.05px;">New</div>
<div class="t" style="left:1512.3px;top:1026.9px;font-size:22.2px;font-weight:400;color:#6b7088;letter-spacing:-0.03px;">Total Unpaid Bills $249,849.46</div>
<div class="t" style="left:1521.0px;top:1160.8px;font-size:21.5px;font-weight:400;color:#3d8af5;letter-spacing:-1.27px;">CURRENT</div>
<div class="t" style="left:1518.5px;top:1197.9px;font-size:36px;font-weight:400;color:#000;letter-spacing:0.51px;">$5,836.79</div>
<div class="t" style="left:1941.2px;top:1160.8px;font-size:21.5px;font-weight:400;color:#f2683a;letter-spacing:-1.60px;">OVERDUE</div>
<div class="t" style="left:1938.2px;top:1197.9px;font-size:36px;font-weight:400;color:#000;letter-spacing:0.35px;">$244,012.67</div>
<div class="t" style="left:549.9px;top:1375.2px;font-size:35px;font-weight:400;color:#000;letter-spacing:-0.74px;">Cash Flow</div>
<div class="t" style="left:2146.0px;top:1383.6px;font-size:25px;font-weight:400;color:#333;letter-spacing:-0.25px;">This Fiscal Year</div>
<svg style="left:0;top:0" width="2992" height="1413"><g fill="none" stroke="#1f77f4" stroke-width="5" stroke-linecap="butt"><path d="M448.5,189.5 V630"/><path d="M611.4,318.3 H575.6 A29,29 0 0 0 546.6,347.3 V566.2"/><path d="M772.6,414.4 H736.7 A29,29 0 0 0 707.7,443.4 V547"/><path d="M2181.2,323.4 H2215.6 A29,29 0 0 1 2244.6,352.4 V569.6"/><path d="M2412.5,260.8 V551"/><path d="M2575.3,169.8 V563.4"/><path d="M2714.5,218.3 H2678.3 A29,29 0 0 0 2649.3,247.3 V563.4"/><path d="M2731,359.9 V550"/><path d="M2816.6,471.5 V563.4"/></g><g fill="#1f77f4"><circle cx="448.5" cy="189.5" r="6.6"/><circle cx="611.4" cy="318.3" r="6.6"/><circle cx="772.6" cy="414.4" r="6.6"/><circle cx="2181.2" cy="323.4" r="6.6"/><circle cx="2412.3" cy="260.8" r="6.6"/><circle cx="2575.4" cy="169.8" r="6.6"/><circle cx="2714.5" cy="218.3" r="6.6"/><circle cx="2730.9" cy="359.9" r="6.6"/><circle cx="2816.6" cy="471.5" r="6.6"/></g></svg>
</body></html>
